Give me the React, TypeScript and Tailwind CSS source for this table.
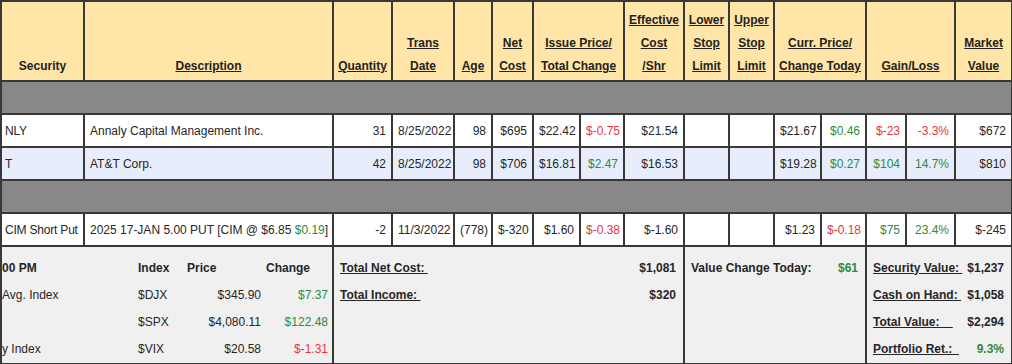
import React from "react";

const red = "text-[#e8353b]";
const green = "text-[#2f8a3c]";

type Pos = {
  sec: string;
  desc: React.ReactNode;
  qty: string;
  date: string;
  age: string;
  net: string;
  issue: string;
  total: string;
  totalUp: boolean;
  eff: string;
  curr: string;
  today: string;
  todayUp: boolean;
  gain: string;
  pct: string;
  gainUp: boolean;
  mkt: string;
  blue?: boolean;
};

const td = "border-2 border-[#383838] px-[5px] whitespace-nowrap";

function Row({ p }: { p: Pos }) {
  return (
    <tr className={`h-[33px] ${p.blue ? "bg-[#e8edfb]" : "bg-white"}`}>
      <td className="border-2 border-[#383838] pl-[3px] pr-0 whitespace-nowrap text-left tracking-[-0.2px]">{p.sec}</td>
      <td className={`${td} text-left`}>{p.desc}</td>
      <td className={`${td} text-right`}>{p.qty}</td>
      <td className={`${td} text-right`}>{p.date}</td>
      <td className={`${td} text-right`}>{p.age}</td>
      <td className={`${td} text-right`}>{p.net}</td>
      <td className={`${td} text-right`}>{p.issue}</td>
      <td className={`${td} text-right ${p.totalUp ? green : red}`}>{p.total}</td>
      <td className={`${td} text-right`}>{p.eff}</td>
      <td className={td}></td>
      <td className={td}></td>
      <td className={`${td} text-right`}>{p.curr}</td>
      <td className={`${td} text-right ${p.todayUp ? green : red}`}>{p.today}</td>
      <td className={`${td} text-right ${p.gainUp ? green : red}`}>{p.gain}</td>
      <td className={`${td} text-right ${p.gainUp ? green : red}`}>{p.pct}</td>
      <td className={`${td} text-right`}>{p.mkt}</td>
    </tr>
  );
}

function GrayRow() {
  return (
    <tr className="h-[33px] bg-[#888888]">
      <td colSpan={16} className="border-2 border-[#383838]"></td>
    </tr>
  );
}

const th = "border-2 border-[#383838] align-bottom font-bold leading-[23px] pb-[2px] px-[2px]";

export default function App() {
  const widths = [83, 249, 59, 62, 38, 41, 47, 44, 60, 45, 45, 47, 45, 40, 49, 57];

  return (
    <div className="w-[1012px] h-[364px] overflow-hidden bg-white font-['Liberation_Sans',Arial,sans-serif] text-[12px] text-[#262626]">
      <table className="border-collapse table-fixed w-[1011px]">
        <colgroup>
          {widths.map((w, i) => (
            <col key={i} style={{ width: w }} />
          ))}
        </colgroup>
        <thead>
          <tr className="h-[80px] bg-[#ffe5a7] text-[#222]">
            <th className={th}>Security</th>
            <th className={th}><u>Description</u></th>
            <th className={th}><u>Quantity</u></th>
            <th className={th}><u>Trans</u><br /><u>Date</u></th>
            <th className={th}><u>Age</u></th>
            <th className={th}><u>Net</u><br /><u>Cost</u></th>
            <th colSpan={2} className={th}><u>Issue Price/</u><br /><u>Total Change</u></th>
            <th className={th}><u>Effective</u><br /><u>Cost</u><br /><u>/Shr</u></th>
            <th className={th}><u>Lower</u><br /><u>Stop</u><br /><u>Limit</u></th>
            <th className={th}><u>Upper</u><br /><u>Stop</u><br /><u>Limit</u></th>
            <th colSpan={2} className={th}><u>Curr. Price/</u><br /><u>Change Today</u></th>
            <th colSpan={2} className={th}><u>Gain/Loss</u></th>
            <th className={th}><u>Market</u><br /><u>Value</u></th>
          </tr>
        </thead>
        <tbody>
          <GrayRow />
          <Row
            p={{
              sec: "NLY",
              desc: "Annaly Capital Management Inc.",
              qty: "31",
              date: "8/25/2022",
              age: "98",
              net: "$695",
              issue: "$22.42",
              total: "$-0.75",
              totalUp: false,
              eff: "$21.54",
              curr: "$21.67",
              today: "$0.46",
              todayUp: true,
              gain: "$-23",
              pct: "-3.3%",
              gainUp: false,
              mkt: "$672",
            }}
          />
          <Row
            p={{
              sec: "T",
              desc: "AT&T Corp.",
              qty: "42",
              date: "8/25/2022",
              age: "98",
              net: "$706",
              issue: "$16.81",
              total: "$2.47",
              totalUp: true,
              eff: "$16.53",
              curr: "$19.28",
              today: "$0.27",
              todayUp: true,
              gain: "$104",
              pct: "14.7%",
              gainUp: true,
              mkt: "$810",
              blue: true,
            }}
          />
          <GrayRow />
          <Row
            p={{
              sec: "CIM Short Put",
              desc: (
                <>
                  2025 17-JAN 5.00 PUT [CIM @ $6.85 <span className={green}>$0.19</span>]
                </>
              ),
              qty: "-2",
              date: "11/3/2022",
              age: "(778)",
              net: "$-320",
              issue: "$1.60",
              total: "$-0.38",
              totalUp: false,
              eff: "$-1.60",
              curr: "$1.23",
              today: "$-0.18",
              todayUp: false,
              gain: "$75",
              pct: "23.4%",
              gainUp: true,
              mkt: "$-245",
            }}
          />
          <tr className="h-[118px] bg-[#f0f0f0] align-top">
            <td colSpan={2} className="border-2 border-[#383838] pt-[7px]">
              <div className="grid grid-cols-[136px_48px_75px_67px] auto-rows-[27px] items-center">
                <div className="font-bold">00 PM</div>
                <div className="font-bold">Index</div>
                <div className="font-bold pl-[1px]">Price</div>
                <div className="font-bold pl-[5px]">Change</div>

                <div>Avg. Index</div>
                <div>$DJX</div>
                <div className="text-right">$345.90</div>
                <div className={`text-right ${green}`}>$7.37</div>

                <div></div>
                <div>$SPX</div>
                <div className="text-right">$4,080.11</div>
                <div className={`text-right ${green}`}>$122.48</div>

                <div>y Index</div>
                <div>$VIX</div>
                <div className="text-right">$20.58</div>
                <div className={`text-right ${red}`}>$-1.31</div>
              </div>
            </td>
            <td colSpan={7} className="border-2 border-[#383838] pt-[7px] pl-[6px] pr-[7px]">
              <div className="grid grid-cols-[1fr_auto] auto-rows-[27px] items-center font-bold">
                <span><u>Total Net Cost:&nbsp;</u></span>
                <span className="text-right">$1,081</span>
                <span><u>Total Income:&nbsp;</u></span>
                <span className="text-right">$320</span>
              </div>
            </td>
            <td colSpan={4} className="border-2 border-[#383838] pt-[7px] pl-[6px] pr-[7px]">
              <div className="grid grid-cols-[1fr_auto] auto-rows-[27px] items-center font-bold">
                <span>Value Change Today:</span>
                <span className={`text-right ${green}`}>$61</span>
              </div>
            </td>
            <td colSpan={3} className="border-2 border-[#383838] pt-[7px] pl-[6px] pr-[7px]">
              <div className="grid grid-cols-[1fr_auto] auto-rows-[27px] items-center font-bold">
                <span><u>Security Value:&nbsp;</u></span>
                <span className="text-right">$1,237</span>
                <span><u>Cash on Hand:&nbsp;</u></span>
                <span className="text-right">$1,058</span>
                <span><u>Total Value:&nbsp;&nbsp;&nbsp;&nbsp;</u></span>
                <span className="text-right">$2,294</span>
                <span><u>Portfolio Ret.:&nbsp;&nbsp;</u></span>
                <span className={`text-right ${green}`}>9.3%</span>
              </div>
            </td>
          </tr>
        </tbody>
      </table>
    </div>
  );
}
